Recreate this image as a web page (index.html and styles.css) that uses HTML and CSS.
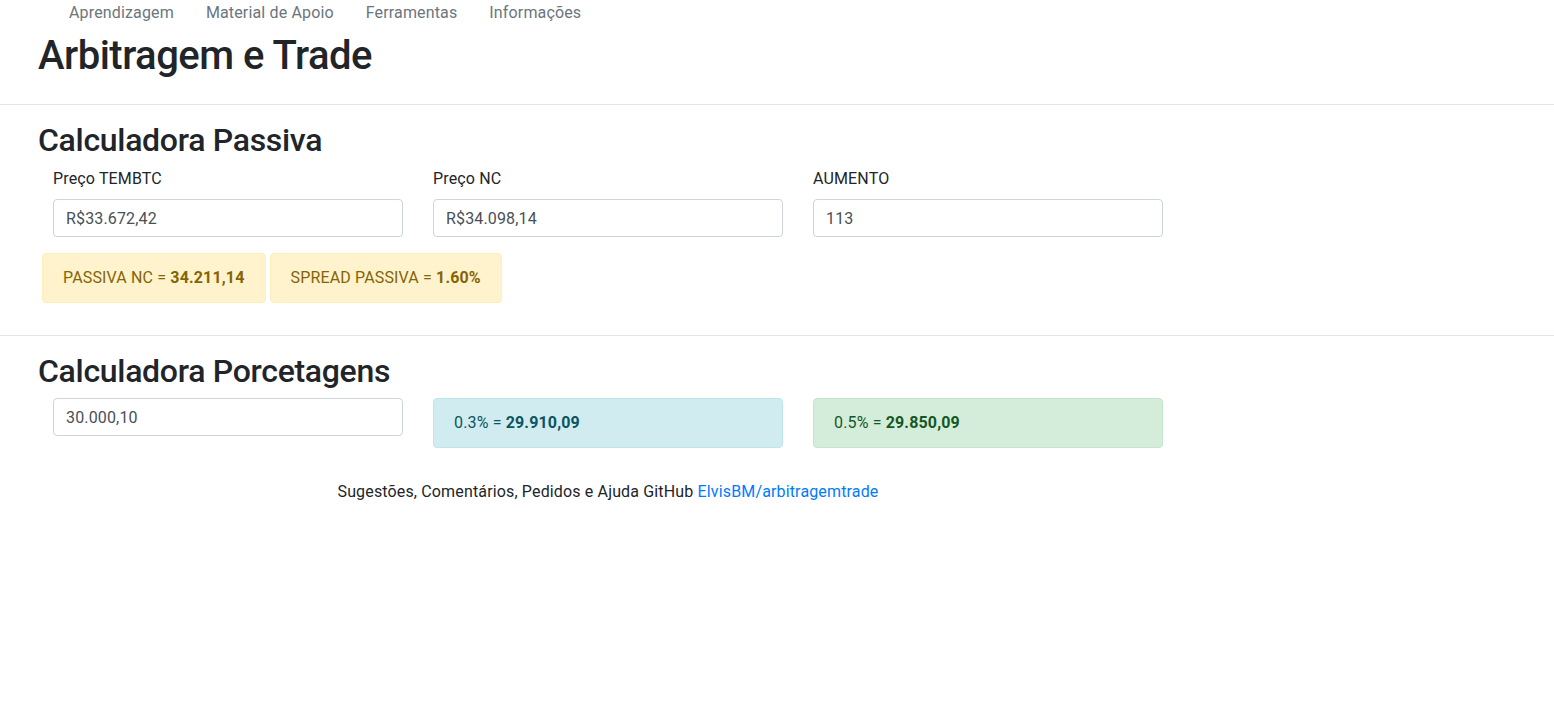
FILE: index.html
```html
<!DOCTYPE html>
<html lang="pt-BR">
<head>
<meta charset="utf-8">
<title>Arbitragem e Trade</title>
<link rel="stylesheet" href="styles.css">
</head>
<body>
<header class="top">
  <nav class="nav">
    <a class="nav-link" href="#">Aprendizagem</a>
    <a class="nav-link" href="#">Material de Apoio</a>
    <a class="nav-link" href="#">Ferramentas</a>
    <a class="nav-link" href="#">Informações</a>
  </nav>
  <h1 class="title">Arbitragem e Trade</h1>
</header>
<hr class="divider">
<section class="section">
  <h2 class="section-title">Calculadora Passiva</h2>
  <div class="row">
    <div class="field">
      <label class="label">Preço TEMBTC</label>
      <input class="input" type="text" value="R$33.672,42">
    </div>
    <div class="field">
      <label class="label">Preço NC</label>
      <input class="input" type="text" value="R$34.098,14">
    </div>
    <div class="field">
      <label class="label">AUMENTO</label>
      <input class="input" type="text" value="113">
    </div>
  </div>
  <div class="results">
    <div class="alert alert-warning">PASSIVA NC = <b>34.211,14</b></div>
    <div class="alert alert-warning">SPREAD PASSIVA = <b>1.60%</b></div>
  </div>
</section>
<hr class="divider">
<section class="section">
  <h2 class="section-title">Calculadora Porcetagens</h2>
  <div class="row">
    <div class="field">
      <input class="input" type="text" value="30.000,10">
    </div>
    <div class="field">
      <div class="alert alert-info">0.3% = <b>29.910,09</b></div>
    </div>
    <div class="field">
      <div class="alert alert-success">0.5% = <b>29.850,09</b></div>
    </div>
  </div>
  <p class="footer">Sugestões, Comentários, Pedidos e Ajuda GitHub <a class="link" href="#">ElvisBM/arbitragemtrade</a></p>
</section>
</body>
</html>
```

FILE: styles.css
```css
* { box-sizing: border-box; }
body {
  margin: 0;
  font-family: Roboto, "Noto Sans", sans-serif;
  font-size: 16px;
  line-height: 1.5;
  letter-spacing: 0.15px;
  color: #212529;
  background: #fff;
}
.top { padding: 1px 0 8px 38px; }
.nav {
  display: flex;
  padding-left: 15px;
}
.nav-link {
  display: block;
  padding: 0 16px;
  line-height: 24px;
  color: #6c757d;
  text-decoration: none;
}
.title {
  margin: 7px 0 0;
  font-size: 40px;
  font-weight: 500;
  line-height: 48px;
  letter-spacing: -0.5px;
}
.divider {
  margin: 16px 0;
  border: 0;
  border-top: 1px solid rgba(0,0,0,.1);
}
.section { padding: 0 0 16px 38px; width: 1178px; }
.section-title {
  margin: 0 0 8px;
  font-size: 32px;
  font-weight: 500;
  line-height: 38px;
  letter-spacing: -0.3px;
}
.row {
  display: grid;
  grid-template-columns: repeat(3, 350px);
  column-gap: 30px;
  padding-left: 15px;
}
.field { margin-bottom: 16px; }
.label {
  display: block;
  margin-bottom: 8px;
  line-height: 24px;
}
.input {
  display: block;
  width: 100%;
  height: 38px;
  padding: 6px 12px;
  font: inherit;
  letter-spacing: inherit;
  color: #495057;
  border: 1px solid #ced4da;
  border-radius: 4px;
  background: #fff;
}
.results {
  display: flex;
  gap: 4px;
  padding-left: 4px;
}
.alert {
  padding: 12px 20px;
  border: 1px solid transparent;
  border-radius: 4px;
  line-height: 24px;
}
.alert b { font-weight: 700; }
.alert-warning { color: #856404; background: #fff3cd; border-color: #ffeeba; }
.alert-info { color: #0c5460; background: #d1ecf1; border-color: #bee5eb; }
.alert-success { color: #155724; background: #d4edda; border-color: #c3e6cb; }
.footer {
  margin: 16px 0 0;
  text-align: center;
}
.link { color: #007bff; text-decoration: none; }
```
